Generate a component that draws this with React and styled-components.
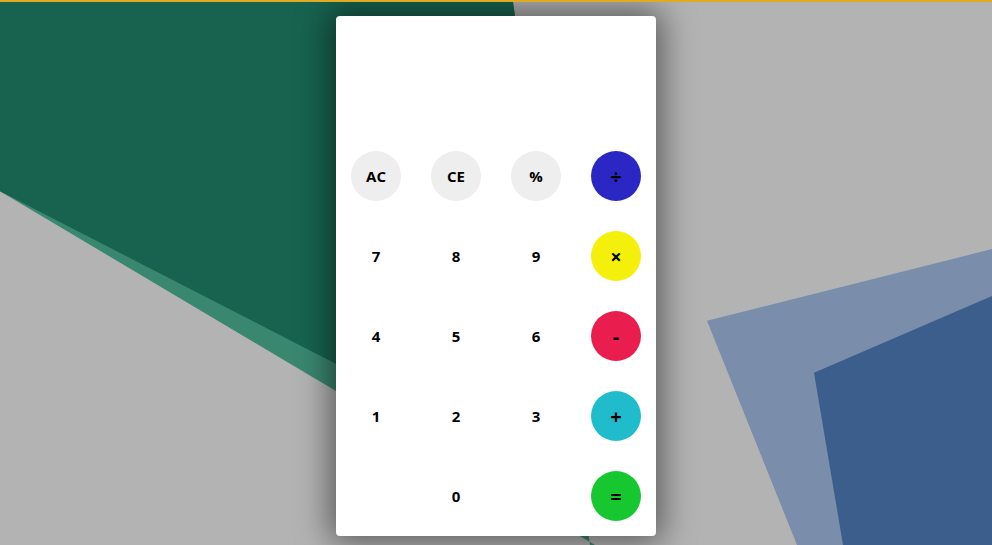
import React from 'react'
import styled, { createGlobalStyle } from 'styled-components'

const GlobalStyle = createGlobalStyle`
  * { box-sizing: border-box; }
  html, body { margin: 0; padding: 0; }
  body {
    font-family: "Open Sans", "Liberation Sans", sans-serif;
    background: #b3b3b3;
  }
`;

const keys = [
  { label: 'AC', kind: 'fn' },
  { label: 'CE', kind: 'fn' },
  { label: '%', kind: 'fn' },
  { label: '÷', kind: 'div' },
  { label: '7' }, { label: '8' }, { label: '9' },
  { label: '×', kind: 'mul' },
  { label: '4' }, { label: '5' }, { label: '6' },
  { label: '-', kind: 'sub' },
  { label: '1' }, { label: '2' }, { label: '3' },
  { label: '+', kind: 'add' },
  { label: '' }, { label: '0' }, { label: '' },
  { label: '=', kind: 'eq' },
];

const colors = {
  fn: '#eeeeee',
  div: '#2a27c4',
  mul: '#f5f00b',
  sub: '#e91e4f',
  add: '#21bccb',
  eq: '#16c72f',
};

const operators = ['div', 'mul', 'sub', 'add', 'eq'];

const Backdrop = () => (
  <Shapes viewBox="0 0 992 545" preserveAspectRatio="none">
    <polygon points="0,0 513,0 590,545 595,545 0,190" fill="#3a876f" />
    <polygon points="0,0 513,0 582,490 0,190" fill="#176350" />
    <polygon points="707,320 992,248 992,545 797,545" fill="#7a8daa" />
    <polygon points="814,372 992,295 992,545 843,545" fill="#3c5e8c" />
  </Shapes>
);

const App = () => {
  return (
    <Page>
      <GlobalStyle />
      <Backdrop />
      <Calculator>
        <Display />
        <Keypad>
          {keys.map((k, i) => (
            <Cell key={i}>
              {k.label && (
                <Key $bg={colors[k.kind]} $op={operators.includes(k.kind)}>
                  {k.label}
                </Key>
              )}
            </Cell>
          ))}
        </Keypad>
      </Calculator>
    </Page>
  )
}

export default App

const Page = styled.div`
  position: relative;
  width: 100%;
  height: 545px;
  overflow: hidden;
  border-top: 2px solid #dfab22;
  display: flex;
  justify-content: center;
  align-items: flex-start;
  padding-top: 14px;
`;

const Shapes = styled.svg`
  position: absolute;
  inset: 0;
  width: 100%;
  height: 100%;
  z-index: 0;
`;

const Calculator = styled.div`
  position: relative;
  z-index: 1;
  width: 320px;
  height: 520px;
  background: #ffffff;
  border-radius: 4px;
  box-shadow: 0 0 32px 6px rgba(0, 0, 0, 0.5);
  display: flex;
  flex-direction: column;
`;

const Display = styled.div`
  height: 120px;
`;

const Keypad = styled.div`
  display: grid;
  grid-template-columns: repeat(4, 80px);
  grid-auto-rows: 80px;
`;

const Cell = styled.div`
  display: flex;
  justify-content: center;
  align-items: center;
`;

const Key = styled.div`
  width: 50px;
  height: 50px;
  border-radius: 50%;
  background: ${p => p.$bg || 'transparent'};
  display: flex;
  justify-content: center;
  align-items: center;
  font-size: ${p => (p.$op ? '20px' : '15px')};
  font-weight: 700;
  color: #000;
  cursor: pointer;
`;
